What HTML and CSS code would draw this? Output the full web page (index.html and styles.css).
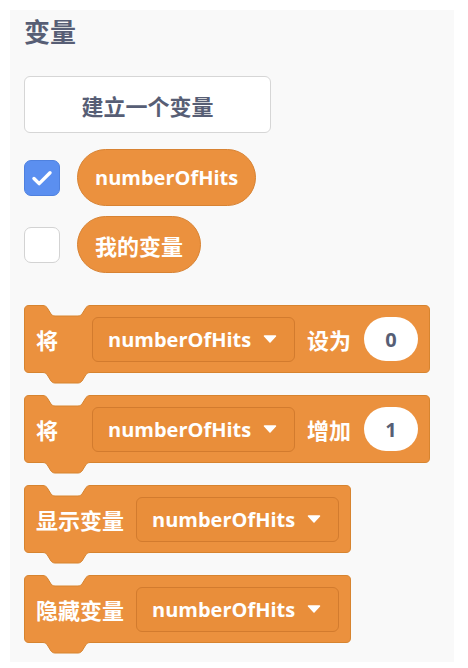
FILE: index.html
```html
<!DOCTYPE html>
<html lang="zh-CN">
<head>
<meta charset="utf-8">
<title>变量</title>
<link rel="stylesheet" href="styles.css">
</head>
<body>
<div class="panel">
  <div class="title">变量</div>
  <div class="make-btn">建立一个变量</div>

  <div class="var-row">
    <span class="checkbox checked">
      <svg width="36" height="36" viewBox="0 0 36 36"><path d="M9.5,18.5 L15,24 L26.5,12.5" fill="none" stroke="#fff" stroke-width="3.6" stroke-linecap="round" stroke-linejoin="round"/></svg>
    </span>
    <span class="pill">numberOfHits</span>
  </div>
  <div class="var-row">
    <span class="checkbox"></span>
    <span class="pill pill-cjk">我的变量</span>
  </div>

  <div class="blocks">
    <div class="block block-wide">
      <svg class="block-shape" width="406" height="80" viewBox="0 0 406 80"><path d="M0.5,5 Q0.5,0.5 5,0.5 H19 C21,0.5 22,1.5 23,2.5 L27,9 C28,10 29,11 31,11 H54 C56,11 57,10 58,9 L62,2.5 C63,1.5 64,0.5 66,0.5 H401 Q405.5,0.5 405.5,5 V63 Q405.5,67.5 401,67.5 H66 C64,67.5 63,68.5 62,69.5 L58,76 C57,77 56,78 54,78 H31 C29,78 28,77 27,76 L23,69.5 C22,68.5 21,67.5 19,67.5 H5 Q0.5,67.5 0.5,63 Z"/></svg>
      <span class="label label-lead">将</span>
      <span class="dropdown"><span>numberOfHits</span><svg class="arrow" width="14" height="8" viewBox="0 0 14 8"><path d="M1.5,1 H12.5 L7,7 Z"/></svg></span>
      <span class="label">设为</span>
      <span class="oval">0</span>
    </div>
    <div class="block block-wide">
      <svg class="block-shape" width="406" height="80" viewBox="0 0 406 80"><path d="M0.5,5 Q0.5,0.5 5,0.5 H19 C21,0.5 22,1.5 23,2.5 L27,9 C28,10 29,11 31,11 H54 C56,11 57,10 58,9 L62,2.5 C63,1.5 64,0.5 66,0.5 H401 Q405.5,0.5 405.5,5 V63 Q405.5,67.5 401,67.5 H66 C64,67.5 63,68.5 62,69.5 L58,76 C57,77 56,78 54,78 H31 C29,78 28,77 27,76 L23,69.5 C22,68.5 21,67.5 19,67.5 H5 Q0.5,67.5 0.5,63 Z"/></svg>
      <span class="label label-lead">将</span>
      <span class="dropdown"><span>numberOfHits</span><svg class="arrow" width="14" height="8" viewBox="0 0 14 8"><path d="M1.5,1 H12.5 L7,7 Z"/></svg></span>
      <span class="label">增加</span>
      <span class="oval">1</span>
    </div>
    <div class="block block-narrow">
      <svg class="block-shape" width="327" height="80" viewBox="0 0 327 80"><path d="M0.5,5 Q0.5,0.5 5,0.5 H19 C21,0.5 22,1.5 23,2.5 L27,9 C28,10 29,11 31,11 H54 C56,11 57,10 58,9 L62,2.5 C63,1.5 64,0.5 66,0.5 H322 Q326.5,0.5 326.5,5 V63 Q326.5,67.5 322,67.5 H66 C64,67.5 63,68.5 62,69.5 L58,76 C57,77 56,78 54,78 H31 C29,78 28,77 27,76 L23,69.5 C22,68.5 21,67.5 19,67.5 H5 Q0.5,67.5 0.5,63 Z"/></svg>
      <span class="label">显示变量</span>
      <span class="dropdown"><span>numberOfHits</span><svg class="arrow" width="14" height="8" viewBox="0 0 14 8"><path d="M1.5,1 H12.5 L7,7 Z"/></svg></span>
    </div>
    <div class="block block-narrow">
      <svg class="block-shape" width="327" height="80" viewBox="0 0 327 80"><path d="M0.5,5 Q0.5,0.5 5,0.5 H19 C21,0.5 22,1.5 23,2.5 L27,9 C28,10 29,11 31,11 H54 C56,11 57,10 58,9 L62,2.5 C63,1.5 64,0.5 66,0.5 H322 Q326.5,0.5 326.5,5 V63 Q326.5,67.5 322,67.5 H66 C64,67.5 63,68.5 62,69.5 L58,76 C57,77 56,78 54,78 H31 C29,78 28,77 27,76 L23,69.5 C22,68.5 21,67.5 19,67.5 H5 Q0.5,67.5 0.5,63 Z"/></svg>
      <span class="label">隐藏变量</span>
      <span class="dropdown"><span>numberOfHits</span><svg class="arrow" width="14" height="8" viewBox="0 0 14 8"><path d="M1.5,1 H12.5 L7,7 Z"/></svg></span>
    </div>
  </div>
</div>
</body>
</html>
```

FILE: styles.css
```css
* { box-sizing: border-box; }

html, body {
  margin: 0;
  padding: 0;
  background: #ffffff;
}

body {
  font-family: "Open Sans", "Noto Sans CJK SC", sans-serif;
  font-weight: 700;
}

.panel {
  margin: 10px;
  width: 444px;
  height: 652px;
  background: #f9f9f9;
  padding: 4px 0 0 14px;
}

.title {
  font-family: "Noto Sans CJK SC", sans-serif;
  font-size: 26px;
  line-height: 34px;
  color: #575e75;
  font-weight: 700;
}

.make-btn {
  margin-top: 28px;
  width: 247px;
  height: 57px;
  background: #ffffff;
  border: 1px solid #d6d6d6;
  border-radius: 6px;
  display: flex;
  align-items: center;
  justify-content: center;
  font-family: "Noto Sans CJK SC", sans-serif;
  font-size: 22px;
  color: #575e75;
  margin-bottom: 16px;
  white-space: nowrap;
}

.var-row {
  display: flex;
  align-items: center;
  gap: 17px;
  height: 57px;
  margin-bottom: 10px;
}

.checkbox {
  flex-shrink: 0;
  width: 36px;
  height: 36px;
  border-radius: 7px;
  background: #ffffff;
  border: 1.5px solid #d3d3d3;
  display: flex;
  align-items: center;
  justify-content: center;
}

.checkbox.checked {
  background: #5b8ff0;
  border-color: #4f81df;
}

.checkbox svg { display: block; }

.pill {
  height: 57px;
  padding: 0 17px;
  border-radius: 29px;
  background: #eb913e;
  border: 1px solid #d88333;
  color: #ffffff;
  font-size: 20px;
  display: flex;
  align-items: center;
  white-space: nowrap;
}

.pill-cjk { font-size: 22px; }

.blocks {
  margin-top: 32px;
  display: flex;
  flex-direction: column;
  gap: 22px;
}

.block {
  position: relative;
  height: 68px;
  display: flex;
  align-items: center;
  gap: 12px;
  padding: 0 13px 0 12px;
  color: #ffffff;
  white-space: nowrap;
}

.block-wide { width: 406px; }
.block-narrow { width: 327px; }

.block-shape {
  position: absolute;
  left: 0;
  top: 0;
  overflow: visible;
}

.block-shape path {
  fill: #eb913e;
  stroke: #d7842f;
  stroke-width: 1;
}

.label {
  position: relative;
  flex-shrink: 0;
  font-family: "Noto Sans CJK SC", sans-serif;
  font-size: 22px;
  line-height: 1;
}

.label-lead { margin-right: 22px; }

.dropdown {
  position: relative;
  flex-shrink: 0;
  width: 203px;
  height: 45px;
  border-radius: 6px;
  background: #e98e3a;
  border: 1px solid #d27b2e;
  display: flex;
  align-items: center;
  gap: 12px;
  padding: 0 0 0 15px;
  font-size: 20px;
}

.arrow path {
  fill: #ffffff;
  stroke: #ffffff;
  stroke-width: 1.5;
  stroke-linejoin: round;
}

.arrow { display: block; }

.oval {
  position: relative;
  flex-shrink: 0;
  width: 54px;
  height: 44px;
  border-radius: 22px;
  background: #ffffff;
  color: #575e75;
  font-size: 20px;
  display: flex;
  align-items: center;
  justify-content: center;
  margin-left: 1px;
}
```
